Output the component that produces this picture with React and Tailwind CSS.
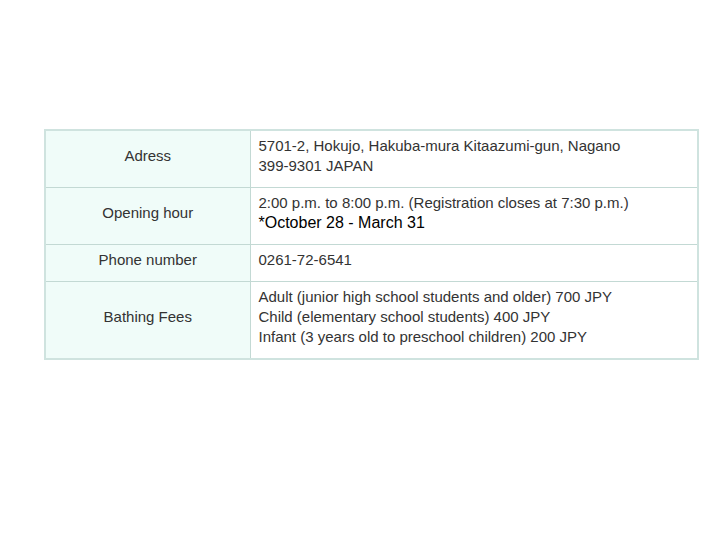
import React from 'react';

const rows = [
  {
    label: 'Adress',
    lines: ['5701-2, Hokujo, Hakuba-mura Kitaazumi-gun, Nagano', '399-9301 JAPAN'],
  },
  {
    label: 'Opening hour',
    lines: ['2:00 p.m. to 8:00 p.m. (Registration closes at 7:30 p.m.)'],
    note: '*October 28 - March 31',
  },
  {
    label: 'Phone number',
    lines: ['0261-72-6541'],
  },
  {
    label: 'Bathing Fees',
    lines: [
      'Adult (junior high school students and older) 700 JPY',
      'Child (elementary school students) 400 JPY',
      'Infant (3 years old to preschool children) 200 JPY',
    ],
  },
];

export default function App() {
  return (
    <div className="w-[720px] h-[540px] bg-white pt-[129px] pl-[44px] font-['Liberation_Sans',Arial,sans-serif]">
      <table className="w-[655px] border-collapse border-2 border-[#cfe3df] text-[15px] leading-[20px] text-[#333]">
        <tbody>
          {rows.map((r) => (
            <tr key={r.label}>
              <th className="w-[205px] bg-[#f0fcf9] border border-[#c3d9d4] font-normal text-center align-middle pt-[5px] pb-[11px]">
                {r.label}
              </th>
              <td className="border border-[#c3d9d4] px-[8px] pt-[5px] pb-[11px] align-middle">
                {r.lines.map((l) => (
                  <div key={l}>{l}</div>
                ))}
                {r.note && <div className="text-[16px] text-black">{r.note}</div>}
              </td>
            </tr>
          ))}
        </tbody>
      </table>
    </div>
  );
}
